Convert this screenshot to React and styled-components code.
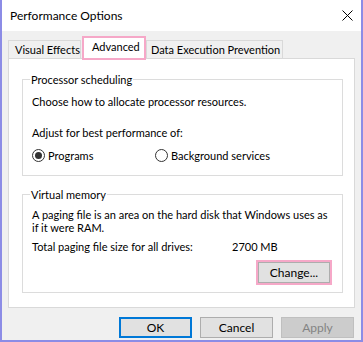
import styled, { createGlobalStyle } from "styled-components";

const GlobalStyle = createGlobalStyle`
  html, body { margin: 0; padding: 0; background: #ffffff; }
  body { font-family: Lato, "Noto Sans", sans-serif; font-size: 11px; color: #000; }
`;

const PINK = "#f6a8c8";

const Window = styled.div`
  width: 363px;
  height: 342px;
  box-sizing: border-box;
  border: 2px solid #8c8ce6;
  border-top: none;
  background: #f0f0f0;
  display: flex;
  flex-direction: column;
`;

const TitleBar = styled.div`
  height: 31px;
  flex: none;
  background: #fff;
  display: flex;
  align-items: center;
  justify-content: space-between;
  padding: 0 8px;
  font-size: 12px;
`;

const Body = styled.div`
  flex: 1;
  padding: 9px 6px 0 6px;
  display: flex;
  flex-direction: column;
`;

const TabRow = styled.div`
  display: flex;
  align-items: flex-start;
  height: 18px;
`;

const Tab = styled.div`
  box-sizing: border-box;
  height: 18px;
  width: ${({ w }) => w}px;
  border: 1px solid #d9d9d9;
  border-bottom: none;
  background: #f0f0f0;
  padding-left: ${({ pl }) => pl}px;
  line-height: 18px;
  white-space: nowrap;
`;

const ActiveTab = styled.div`
  position: relative;
  z-index: 1;
  box-sizing: border-box;
  width: 64px;
  height: 24px;
  margin: -4px 0 0 1px;
  border: 2px solid ${PINK};
  background: #fff;
  padding-left: 8px;
  line-height: 18px;
  white-space: nowrap;
`;

const Panel = styled.div`
  box-sizing: border-box;
  width: 347px;
  height: 250px;
  background: #fff;
  border: 1px solid #d9d9d9;
  padding: 13px 0 0 13px;
  display: flex;
  flex-direction: column;
  gap: 11px;
`;

const Group = styled.fieldset`
  box-sizing: border-box;
  width: 321px;
  margin: 0;
  border: 1px solid #dcdcdc;
  padding: 0 9px ${({ pb }) => pb}px 9px;
  min-width: 0;
`;

const Legend = styled.legend`
  padding: 0 1px;
  margin-left: -2px;
  line-height: 15px;
`;

const Line = styled.div`
  line-height: ${({ lh }) => lh || 15}px;
  margin-top: ${({ mt }) => mt || 0}px;
  white-space: nowrap;
`;

const RadioRow = styled.div`
  display: flex;
  margin-top: 8px;
  height: 15px;
  align-items: center;
`;

const RadioItem = styled.label`
  display: flex;
  align-items: center;
  gap: 3px;
  width: ${({ w }) => (w ? `${w}px` : "auto")};
  line-height: 15px;
`;

const RadioCircle = styled.span`
  box-sizing: border-box;
  width: 13px;
  height: 13px;
  border-radius: 50%;
  border: 1px solid #333;
  background: #fff;
  display: flex;
  align-items: center;
  justify-content: center;
  &::after {
    content: "";
    width: 7px;
    height: 7px;
    border-radius: 50%;
    background: ${({ checked }) => (checked ? "#333" : "transparent")};
  }
`;

const SizeRow = styled.div`
  display: flex;
  margin-top: 5px;
  line-height: 15px;
`;

const SizeLabel = styled.span`
  width: 200px;
`;

const ChangeRow = styled.div`
  display: flex;
  justify-content: flex-end;
  margin-top: 6px;
  padding-right: 1px;
`;

const Highlight = styled.div`
  border: 2px solid ${PINK};
  display: flex;
`;

const Button = styled.button`
  box-sizing: border-box;
  width: ${({ w }) => w || 73}px;
  height: 21px;
  padding: 0;
  font-family: inherit;
  font-size: 12px;
  color: ${({ disabled }) => (disabled ? "#838383" : "#000")};
  background: ${({ disabled }) => (disabled ? "#cccccc" : "#e1e1e1")};
  border: ${({ primary, disabled }) =>
    primary ? "2px solid #0078d7" : disabled ? "1px solid #bfbfbf" : "1px solid #adadad"};
`;

const Footer = styled.div`
  display: flex;
  justify-content: flex-end;
  gap: 8px;
  margin-top: 9px;
  padding-right: 1px;
`;

const CloseIcon = () => (
  <svg width="11" height="11" viewBox="0 0 11 11">
    <path d="M0.5 0.5 L10.5 10.5 M10.5 0.5 L0.5 10.5" stroke="#000" strokeWidth="1" fill="none" />
  </svg>
);

const App = () => {
  return (
    <Window>
      <GlobalStyle />
      <TitleBar>
        <span>Performance Options</span>
        <CloseIcon />
      </TitleBar>
      <Body>
        <TabRow>
          <Tab w={73} pl={6}>Visual Effects</Tab>
          <ActiveTab>Advanced</ActiveTab>
          <Tab w={137} pl={4}>Data Execution Prevention</Tab>
        </TabRow>
        <Panel>
          <Group pb={12}>
            <Legend>Processor scheduling</Legend>
            <Line mt={7}>Choose how to allocate processor resources.</Line>
            <Line mt={16}>Adjust for best performance of:</Line>
            <RadioRow>
              <RadioItem w={123}>
                <RadioCircle checked />
                Programs
              </RadioItem>
              <RadioItem>
                <RadioCircle />
                Background services
              </RadioItem>
            </RadioRow>
          </Group>
          <Group pb={7}>
            <Legend>Virtual memory</Legend>
            <Line mt={6} lh={13}>
              A paging file is an area on the hard disk that Windows uses as
              <br />
              if it were RAM.
            </Line>
            <SizeRow>
              <SizeLabel>Total paging file size for all drives:</SizeLabel>
              <span>2700 MB</span>
            </SizeRow>
            <ChangeRow>
              <Highlight>
                <Button w={72}>Change...</Button>
              </Highlight>
            </ChangeRow>
          </Group>
        </Panel>
        <Footer>
          <Button primary>OK</Button>
          <Button>Cancel</Button>
          <Button disabled>Apply</Button>
        </Footer>
      </Body>
    </Window>
  );
};

export default App;
